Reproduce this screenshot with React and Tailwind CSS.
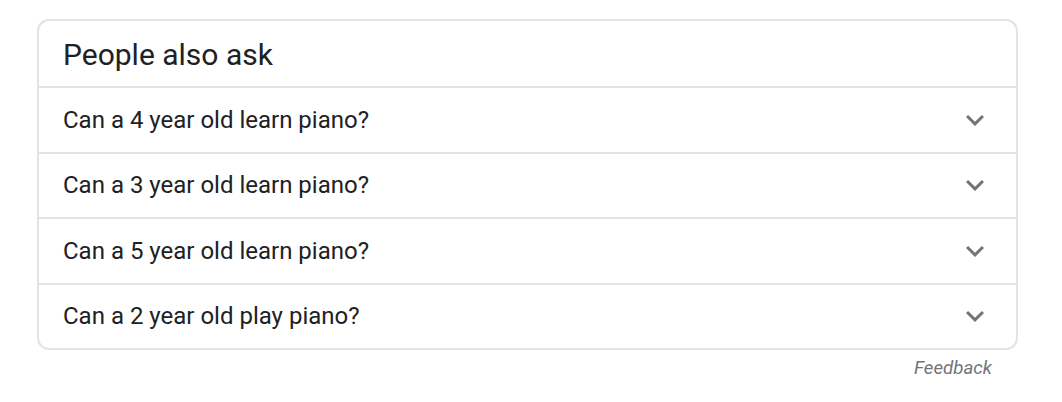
import React from "react";

const questions = [
  "Can a 4 year old learn piano?",
  "Can a 3 year old learn piano?",
  "Can a 5 year old learn piano?",
  "Can a 2 year old play piano?",
];

function Chevron() {
  return (
    <svg width="36" height="36" viewBox="0 0 24 24" fill="#70757a">
      <path d="M16.59 8.59L12 13.17 7.41 8.59 6 10l6 6 6-6z" />
    </svg>
  );
}

export default function App() {
  return (
    <div
      className="w-[1062px] h-[402px] bg-white pt-[19px] pl-[37px]"
      style={{ fontFamily: "Roboto, 'Liberation Sans', Arial, sans-serif" }}
    >
      <div className="w-[981px] border-2 border-[#e2e3e6] rounded-[12px] overflow-hidden">
        <div className="h-[65px] flex items-center pl-[24px]">
          <span className="text-[30px] leading-none text-[#202124] mt-[2px]">People also ask</span>
        </div>
        {questions.map((q) => (
          <div
            key={q}
            className="h-[65.5px] border-t-2 border-[#e2e3e6] flex items-center justify-between pl-[24px] pr-[23px]"
          >
            <span className="text-[24px] leading-none text-[#202124]">{q}</span>
            <Chevron />
          </div>
        ))}
      </div>
      <div className="w-[981px] flex justify-end pr-[26px] mt-[6px]">
        <span className="text-[18.7px] italic text-[#70757a] leading-[24px]">Feedback</span>
      </div>
    </div>
  );
}
